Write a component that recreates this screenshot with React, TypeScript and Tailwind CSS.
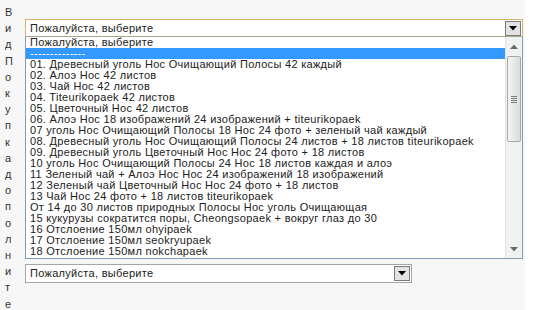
import React from 'react'

const items = [
  '01. Древесный уголь Нос Очищающий Полосы 42 каждый',
  '02. Алоэ Нос 42 листов',
  '03. Чай Нос 42 листов',
  '04. Titeurikopaek 42 листов',
  '05. Цветочный Нос 42 листов',
  '06. Алоэ Нос 18 изображений 24 изображений + titeurikopaek',
  '07 уголь Нос Очищающий Полосы 18 Нос 24 фото + зеленый чай каждый',
  '08. Древесный уголь Нос Очищающий Полосы 24 листов + 18 листов titeurikopaek',
  '09. Древесный уголь Цветочный Нос Нос 24 фото + 18 листов',
  '10 уголь Нос Очищающий Полосы 24 Нос 18 листов каждая и алоэ',
  '11 Зеленый чай + Алоэ Нос Нос 24 изображений 18 изображений',
  '12 Зеленый чай Цветочный Нос Нос 24 фото + 18 листов',
  '13 Чай Нос 24 фото + 18 листов titeurikopaek',
  'От 14 до 30 листов природных Полосы Нос уголь Очищающая',
  '15 кукурузы сократится поры, Cheongsopaek + вокруг глаз до 30',
  '16 Отслоение 150мл ohyipaek',
  '17 Отслоение 150мл seokryupaek',
  '18 Отслоение 150мл nokchapaek',
]

function Arrow({ className }: { className?: string }) {
  return (
    <svg width="8" height="5" viewBox="0 0 8 5" className={className}>
      <path d="M0 0h8L4 4.5z" fill="currentColor" />
    </svg>
  )
}

function DropButton() {
  return (
    <div className="w-[16px] h-[15px] border border-[#7c7c7c] bg-[#e3e3e3] flex items-center justify-center text-black">
      <Arrow />
    </div>
  )
}

export default function App() {
  return (
    <div
      className="w-[541px] h-[310px] bg-white overflow-hidden text-[#222]"
      style={{ fontFamily: '"Liberation Sans", Arial, sans-serif' }}
    >
      <div className="w-[525px] h-full bg-[#f7f7f7] flex">
        {/* vertical label */}
        <div className="w-[25px] shrink-0 pl-[5px] pt-[4px]">
          <div className="w-[9px] break-all text-[11px] leading-[16.2px] text-[#333]">
            Вид Покупка дополните
          </div>
        </div>

        <div className="flex flex-col pt-[19px] text-[11px] tracking-[0.3px]">
          {/* open select */}
          <div className="w-[498px] h-[18px] border border-[#d9b36d] border-b-[#a9a596] bg-white flex items-center justify-between pl-[4px] pr-[1px]">
            <span className="leading-[11px]">Пожалуйста, выберите</span>
            <DropButton />
          </div>

          <div className="w-[498px] h-[222px] border border-[#7f9db9] border-t-0 bg-white flex">
            <div className="flex-1 flex flex-col">
              <div className="h-[11px] leading-[11px] pl-[4px] whitespace-nowrap">Пожалуйста, выберите</div>
              <div className="h-[11px] leading-[11px] pl-[4px] bg-[#3399ff] text-white">--------------</div>
              {items.map((item, i) => (
                <div key={i} className="h-[11px] leading-[11px] pl-[4px] whitespace-nowrap">
                  {item}
                </div>
              ))}
            </div>

            {/* scrollbar */}
            <div className="w-[17px] bg-[#f1f1f1] border-l border-[#e4e4e4] flex flex-col items-center">
              <div className="h-[18px] flex items-center justify-center text-[#6a6a6a]">
                <Arrow className="rotate-180" />
              </div>
              <div className="mt-[1px] w-[14px] h-[86px] rounded-[2px] border border-[#a8a8a8] bg-gradient-to-r from-[#f4f4f4] to-[#dcdcdc] flex flex-col items-center justify-center gap-[1px]">
                <div className="w-[6px] h-[1px] bg-[#7a7a7a]" />
                <div className="w-[6px] h-[1px] bg-[#7a7a7a]" />
                <div className="w-[6px] h-[1px] bg-[#7a7a7a]" />
                <div className="w-[6px] h-[1px] bg-[#7a7a7a]" />
              </div>
              <div className="flex-1" />
              <div className="h-[18px] flex items-center justify-center text-[#6a6a6a]">
                <Arrow />
              </div>
            </div>
          </div>

          {/* second select */}
          <div className="mt-[5px] w-[387px] h-[19px] border border-[#a5a5a5] bg-white flex items-center justify-between pl-[4px] pr-[1px]">
            <span className="leading-[11px]">Пожалуйста, выберите</span>
            <DropButton />
          </div>
        </div>
      </div>
    </div>
  )
}
